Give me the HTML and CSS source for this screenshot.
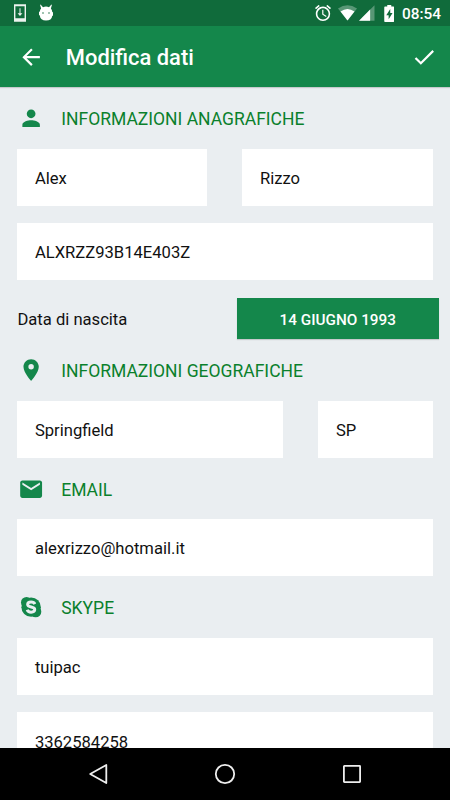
FILE: index.html
```html
<!DOCTYPE html>
<html lang="it">
<head>
<meta charset="utf-8">
<title>Modifica dati</title>
<link rel="stylesheet" href="styles.css">
</head>
<body>
<div class="screen">
  <header class="status">
    <svg class="status-download" viewBox="0 0 12 18"><path fill-rule="evenodd" d="M0 .3h12v17.400H0zM1.400 2.200v12h9.200v-12z"/><path d="M5.500 4.300h1v5h1.900L6 12 3.600 9.300h1.900z"/></svg>
    <svg class="status-droid" viewBox="0 0 14 17"><path fill-rule="evenodd" d="M1.600.5 4 3.200a8 8 0 0 1 6 0L12.400.5l.5.4-1 3.500q1.200 1.200 1.300 3.300l.8.7v3l-.8.6q-.5 4.500-6.200 4.500T.8 11.500L0 11V8l.8-.6Q1 5.500 2.100 4.400L1.100.9zM4 8.300a.75.75 0 1 0 0 1.500.75.75 0 0 0 0-1.500zm6 0a.75.75 0 1 0 0 1.500.75.75 0 0 0 0-1.500z"/></svg>
    <span class="spacer"></span>
    <svg class="status-alarm" viewBox="2 2 20 20"><path d="M22 5.720l-4.600-3.860-1.290 1.530 4.600 3.860L22 5.720zM7.880 3.390L6.600 1.860 2 5.710l1.290 1.530 4.590-3.850zM12.500 8H11v6l4.750 2.850.75-1.230-4-2.370V8zM12 4c-4.970 0-9 4.030-9 9s4.020 9 9 9a9 9 0 0 0 0-18zm0 16c-3.870 0-7-3.130-7-7s3.130-7 7-7 7 3.130 7 7-3.130 7-7 7z"/></svg>
    <svg class="status-wifi" viewBox="0 0 19 16"><path class="faint" d="M0 3.500Q9.500-3 19 3.500L9.500 15.500z"/><path d="M2.500 6.500q7-5 14 0l-7 9z"/></svg>
    <svg class="status-signal" viewBox="0 0 16 16"><path class="faint" d="M0 16 16 0v16z"/><path d="M0 16 11.500 4.500V16z"/></svg>
    <svg class="status-battery" viewBox="0 0 10 17"><path fill-rule="evenodd" d="M3 0h4v1.600h2.200q.8 0 .8.800v13.800q0 .8-.8.800H.8q-.8 0-.8-.8V2.400q0-.8.8-.8H3zM6 4 2 10.300h2.400v4L8.300 8H6z"/></svg>
    <span class="clock">08:54</span>
  </header>
  <div class="appbar">
    <svg class="icon" viewBox="0 0 24 24"><path d="M20 11H7.830l5.590-5.590L12 4l-8 8 8 8 1.410-1.410L7.830 13H20v-2z"/></svg>
    <h1 class="title">Modifica dati</h1>
    <svg class="icon" viewBox="0 0 24 24"><path d="M9 16.170L4.830 12l-1.420 1.410L9 19 21 7l-1.410-1.410z"/></svg>
  </div>
  <main class="content">
    <h2 class="section"><svg class="icon" viewBox="0 0 24 24"><path d="M12 12c2.210 0 4-1.790 4-4s-1.790-4-4-4-4 1.790-4 4 1.790 4 4 4zm0 2c-2.670 0-8 1.340-8 4v2h16v-2c0-2.660-5.330-4-8-4z"/></svg><span>INFORMAZIONI ANAGRAFICHE</span></h2>
    <div class="row names"><div class="field">Alex</div><div class="field">Rizzo</div></div>
    <div class="field code">ALXRZZ93B14E403Z</div>
    <div class="birth"><span>Data di nascita</span><button class="date">14 GIUGNO 1993</button></div>
    <h2 class="section"><svg class="icon" viewBox="0 0 24 24"><path d="M12 2C8.130 2 5 5.130 5 9c0 5.250 7 13 7 13s7-7.750 7-13c0-3.870-3.130-7-7-7zm0 9.500a2.500 2.500 0 0 1 0-5 2.500 2.500 0 0 1 0 5z"/></svg><span>INFORMAZIONI GEOGRAFICHE</span></h2>
    <div class="row place"><div class="field">Springfield</div><div class="field">SP</div></div>
    <h2 class="section"><svg class="icon" viewBox="0 0 24 24"><path d="M20 4H4c-1.100 0-1.990.9-1.990 2L2 18c0 1.100.9 2 2 2h16c1.100 0 2-.9 2-2V6c0-1.100-.9-2-2-2zm0 4l-8 5-8-5V6l8 5 8-5v2z"/></svg><span>EMAIL</span></h2>
    <div class="field">alexrizzo@hotmail.it</div>
    <h2 class="section"><svg class="icon" viewBox="0 0 24 24"><circle cx="12" cy="12" r="8.900"/><circle cx="7.800" cy="7.800" r="5.100"/><circle cx="16.200" cy="16.200" r="5.100"/><path class="skype-mark" d="M15.400 9.200C14.800 7.800 13.600 7.400 12 7.400c-1.900 0-3.200.8-3.200 2.200 0 3.200 6.500 1.500 6.500 4.600 0 1.600-1.500 2.400-3.300 2.400-1.900 0-3.100-.7-3.600-2.200"/></svg><span>SKYPE</span></h2>
    <div class="field">tuipac</div>
    <div class="field phone">3362584258</div>
  </main>
  <nav class="navbar">
    <svg viewBox="0 0 22 22"><path d="M19.300 2v18L3.200 11z"/></svg>
    <svg viewBox="0 0 22 22"><circle cx="11" cy="11" r="9.200"/></svg>
    <svg viewBox="0 0 22 22"><rect x="2.900" y="2.900" width="16.200" height="16.200" rx=".5"/></svg>
  </nav>
</div>
</body>
</html>
```
FILE: styles.css
```css
* { box-sizing: border-box; }
body { margin: 0; font-family: Roboto, "Liberation Sans", sans-serif; }
svg { display: block; flex: none; fill: currentColor; }
.screen { width: 450px; height: 800px; overflow: hidden; display: flex; flex-direction: column; background: #eaeef1; }
.status { flex: none; height: 26px; padding: 0 8px 0 14px; display: flex; align-items: center; background: #106b3b; color: #fff; }
.status-download { width: 12px; height: 18px; opacity: .92; }
.status-droid { width: 14px; height: 17px; margin: -1px 0 0 13px; }
.spacer { flex: 1; }
.status-alarm { width: 16px; height: 16px; }
.status-wifi { width: 19px; height: 16px; margin: 0 0 0 7px; }
.status-signal { width: 15.500px; height: 16px; margin: 0 0 0 2px; }
.status-battery { width: 10.500px; height: 17px; margin-left: 9px; }
.faint { opacity: .3; }
.clock { margin-left: 8px; padding-top: 1px; width: 40px; font-size: 15.400px; font-weight: 500; white-space: nowrap; }
.appbar { flex: none; height: 61.300px; padding: 0 13px 0 17.600px; display: flex; align-items: center; background: #14874b; color: #fff; box-shadow: 0 1px 1px rgba(0,0,0,.15); }
.icon { width: 26.250px; height: 26.250px; }
.title { flex: 1; margin: 0 0 0 22px; padding-top: 2px; font-size: 21.900px; font-weight: 500; }
.content { flex: 1; min-height: 0; overflow: hidden; padding: 0 17.500px 0 17.400px; font-size: 16.600px; color: #111; }
.section { display: flex; align-items: center; height: 61.300px; margin: 0; padding-top: 1px; font-size: 17.500px; font-weight: 400; color: #0a802c; }
.section span { margin-left: 17.400px; padding-top: 1.200px; }
.section .icon { margin-left: .2px; color: #14874b; }
.skype-mark { fill: none; stroke: #eaeef1; stroke-width: 2.700; }
.row { display: grid; gap: 35px; }
.names { grid-template-columns: 1fr 1fr; }
.place { grid-template-columns: 7fr 3fr; }
.field { height: 57.200px; padding: 2px 17.500px 0; display: flex; align-items: center; background: #fff; }
.code, .phone { margin-top: 17.500px; }
.birth { display: flex; align-items: center; justify-content: space-between; margin: 17.500px -6.500px 0 0; height: 41.500px; }
.birth span { padding-top: 2px; }
.date { width: 202.500px; height: 41.500px; padding: 3px 0 0; border: 0; background: #14874b; color: #fff; font: 500 15.300px Roboto, "Liberation Sans", sans-serif; box-shadow: 0 1px 1px rgba(0,0,0,.15); }
.navbar { flex: none; height: 52.500px; display: flex; align-items: center; justify-content: center; gap: 105px; background: #000; color: #eee; }
.navbar svg { width: 22px; height: 22px; fill: none; stroke: currentColor; stroke-width: 1.800; stroke-linejoin: round; }
```
